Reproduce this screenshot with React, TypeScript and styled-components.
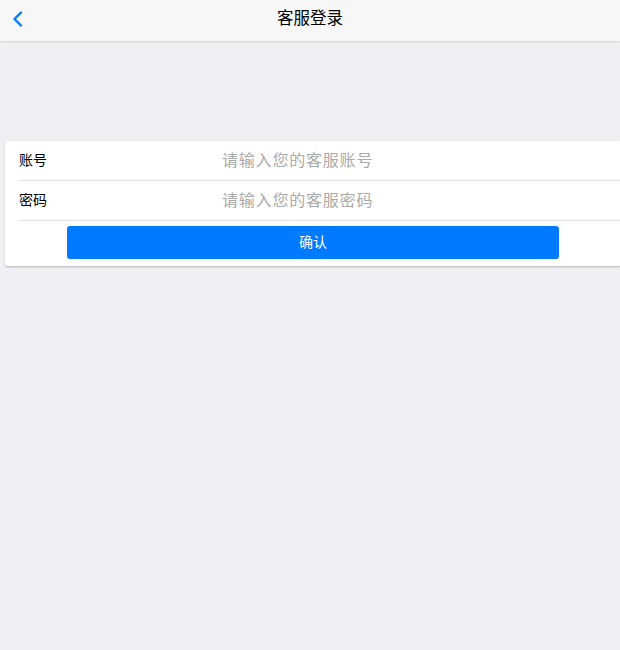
import React from 'react';
import styled, { createGlobalStyle } from 'styled-components';

const GlobalStyle = createGlobalStyle`
    html, body {
        margin: 0;
        padding: 0;
        background: #efeff4;
        overflow: hidden;
    }
    body {
        font-family: "Noto Sans CJK SC", "Liberation Sans", sans-serif;
    }
`

const Page = styled.div`
    min-height: 650px;
    background: #efeff4;
`

const NavBar = styled.header`
    height: 41px;
    background: #f7f7f8;
    box-shadow: 0 1px 2px rgba(0, 0, 0, 0.12);
    display: grid;
    grid-template-columns: 60px 1fr 60px;
    align-items: start;
`

const BackBtn = styled.button`
    background: none;
    border: none;
    padding: 0 0 0 12px;
    height: 38px;
    display: flex;
    align-items: center;
    cursor: pointer;
`

const Title = styled.h1`
    margin: 0;
    font-size: 16.5px;
    font-weight: 400;
    color: #000;
    text-align: center;
    line-height: 35px;
`

const Card = styled.form`
    margin: 100px -1px 0 5px;
    background: #fff;
    border-radius: 3px;
    box-shadow: 0 1px 2px rgba(0, 0, 0, 0.25);
    padding-left: 14px;
`

const Row = styled.label`
    display: flex;
    align-items: center;
    height: 39px;
    border-bottom: 1px solid #e0e0e0;
`

const Label = styled.span`
    width: 203px;
    font-size: 14px;
    color: #000;
    margin-top: -4px;
`

const Input = styled.input`
    flex: 1;
    border: none;
    outline: none;
    font-family: inherit;
    font-size: 16px;
    letter-spacing: 0.8px;
    color: #333;
    padding: 0;
    margin-top: -3px;
    background: transparent;

    &::placeholder {
        color: #aaaaaa;
    }
`

const ButtonRow = styled.div`
    padding: 5px 0 7px;
    margin-left: -14px;
    display: flex;
    justify-content: center;
`

const Submit = styled.button`
    width: 80%;
    height: 33px;
    border: none;
    border-radius: 3px;
    background: #007aff;
    color: #fff;
    font-family: inherit;
    font-size: 14px;
    padding: 0 0 3px;
    cursor: pointer;
`

const App: React.FC = () => {
    return (
        <Page>
            <GlobalStyle />
            <NavBar>
                <BackBtn type="button" aria-label="back">
                    <svg width="11" height="16" viewBox="0 0 11 16">
                        <path d="M9 1.5 L2.5 8 L9 14.5" fill="none" stroke="#007aff" strokeWidth="2.4" strokeLinecap="round" strokeLinejoin="round" />
                    </svg>
                </BackBtn>
                <Title>客服登录</Title>
                <div />
            </NavBar>
            <Card onSubmit={(e) => e.preventDefault()}>
                <Row>
                    <Label>账号</Label>
                    <Input type="text" placeholder="请输入您的客服账号" />
                </Row>
                <Row>
                    <Label>密码</Label>
                    <Input type="password" placeholder="请输入您的客服密码" />
                </Row>
                <ButtonRow>
                    <Submit type="submit">确认</Submit>
                </ButtonRow>
            </Card>
        </Page>
    );
}

export default App;
